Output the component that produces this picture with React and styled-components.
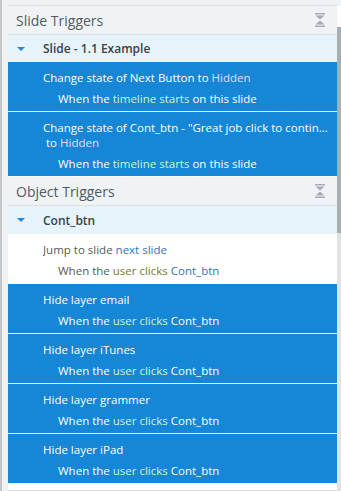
import React from 'react'
import styled, { createGlobalStyle } from 'styled-components'

const GlobalStyle = createGlobalStyle`
  html, body {
    margin: 0;
    padding: 0;
    background: #eff1f3;
    overflow: hidden;
  }
  * { box-sizing: border-box; }
`

const BLUE = '#1686d6'

const Frame = styled.div`
  display: flex;
  width: 341px;
  height: 491px;
  font-family: "Open Sans", "Noto Sans", sans-serif;
`

const Gutter = styled.div`
  width: 8px;
  flex: none;
  border-left: 2px solid #c4c7ca;
  background: #eff1f3;
`

const Main = styled.div`
  flex: 1;
  display: flex;
  flex-direction: column;
  min-width: 0;
`

const TopStrip = styled.div`
  height: 6px;
  flex: none;
  background: #eff1f3;
  border-bottom: 1px solid #dde1e4;
`

const Panel = styled.div`
  background: #fff;
  padding-bottom: 6px;
  border-bottom: 1px solid #d6dadd;
`

const SectionHeader = styled.div`
  height: 29px;
  display: flex;
  align-items: center;
  justify-content: space-between;
  padding: 0 12px 0 8px;
  background: #f0f3f6;
  border-bottom: 1px solid #dce1e5;
  color: #525a61;
  font-size: 14px;
`

const GroupRow = styled.div`
  height: ${p => p.$h || 27}px;
  display: flex;
  align-items: center;
  background: #e7f3fb;
  color: #3b4247;
  font-size: 12px;
  font-weight: 600;
`

const Caret = styled.span`
  width: 35px;
  flex: none;
  display: flex;
  justify-content: flex-start;
  padding-left: 9px;
  &::before {
    content: '';
    border-left: 4px solid transparent;
    border-right: 4px solid transparent;
    border-top: 4px solid #2b86d0;
  }
`

const Trigger = styled.div`
  padding: 8px 8px 5px 35px;
  background: ${p => (p.$selected ? BLUE : '#fff')};
  color: ${p => (p.$selected ? '#fff' : '#555a5e')};
  border-bottom: 1px solid #fff;
  font-size: 11.5px;
  line-height: 15px;
`

const Action = styled.div`
  white-space: nowrap;
  overflow: hidden;
  text-overflow: ellipsis;
  padding-left: ${p => p.$indent || 0}px;
`

const Condition = styled.div`
  margin-top: 6px;
  padding-left: 15px;
  white-space: nowrap;
`

const Val = styled.span`
  color: ${p => (p.$selected ? '#e4dcff' : '#2f74b8')};
`

const Evt = styled.span`
  color: ${p => (p.$selected ? '#cdf3cd' : '#7c7a2c')};
`

const Obj = styled.span`
  color: ${p => (p.$selected ? '#fff' : '#2f74b8')};
`

const ScrollBar = styled.div`
  width: 4px;
  flex: none;
  display: flex;
  flex-direction: column;
  background: #e0e3e6;
`

const ScrollCap = styled.div`
  height: 27px;
  background: #fff;
  border-top: 6px solid #eff1f3;
`

const Thumb = styled.div`
  height: 206px;
  background: #a9aeb2;
`

const CollapseIcon = () => (
  <svg width="10" height="14" viewBox="0 0 10 14">
    <g fill="#a8acb0">
      <rect x="0" y="0" width="10" height="1.5" />
      <polygon points="0.5,2.5 9.5,2.5 5,6.6" />
      <polygon points="5,7.4 0.5,11.5 9.5,11.5" />
      <rect x="0" y="12.5" width="10" height="1.5" />
    </g>
  </svg>
)

const hideLayers = ['email', 'iTunes', 'grammer', 'iPad']

export default function App() {
  return (
    <>
      <GlobalStyle />
      <Frame>
        <Gutter />
        <Main>
          <TopStrip />
          <Panel>
            <SectionHeader>
              Slide Triggers
              <CollapseIcon />
            </SectionHeader>
            <GroupRow>
              <Caret />
              Slide - 1.1 Example
            </GroupRow>
            <Trigger $selected>
              <Action>
                Change state of Next Button to <Val $selected>Hidden</Val>
              </Action>
              <Condition>
                When the <Evt $selected>timeline starts</Evt> on this slide
              </Condition>
            </Trigger>
            <Trigger $selected>
              <Action>Change state of Cont_btn - "Great job click to contin...</Action>
              <Action $indent={3}>
                to <Val $selected>Hidden</Val>
              </Action>
              <Condition>
                When the <Evt $selected>timeline starts</Evt> on this slide
              </Condition>
            </Trigger>

            <SectionHeader>
              Object Triggers
              <CollapseIcon />
            </SectionHeader>
            <GroupRow $h={28}>
              <Caret />
              Cont_btn
            </GroupRow>
            <Trigger>
              <Action>
                Jump to slide <Val>next slide</Val>
              </Action>
              <Condition>
                When the <Evt>user clicks</Evt> <Obj>Cont_btn</Obj>
              </Condition>
            </Trigger>
            {hideLayers.map(name => (
              <Trigger $selected key={name}>
                <Action>Hide layer {name}</Action>
                <Condition>
                  When the <Evt $selected>user clicks</Evt> <Obj $selected>Cont_btn</Obj>
                </Condition>
              </Trigger>
            ))}
          </Panel>
        </Main>
        <ScrollBar>
          <ScrollCap />
          <Thumb />
        </ScrollBar>
      </Frame>
    </>
  )
}
